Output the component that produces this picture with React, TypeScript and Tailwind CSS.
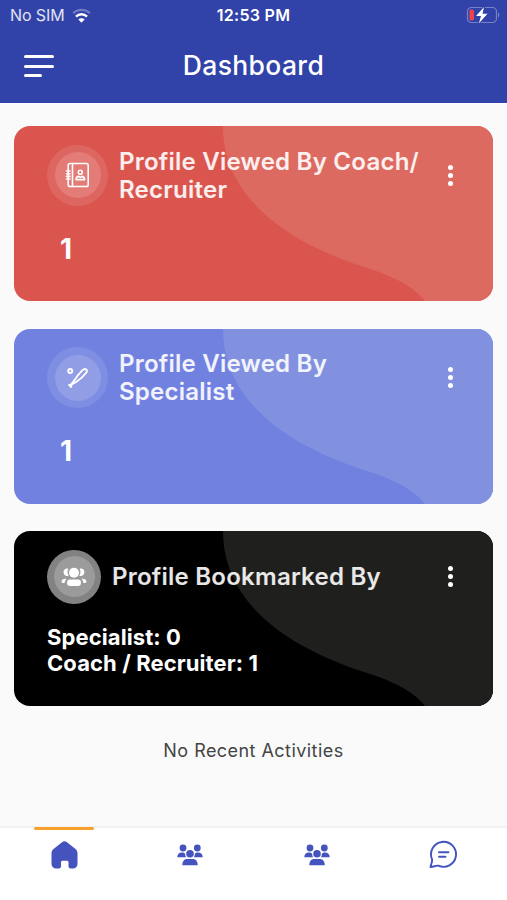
import React from 'react';

type StatCardProps = {
  title: React.ReactNode;
  icon: React.ReactNode;
  className: string;
  waveClassName: string;
  children: React.ReactNode;
};

const WifiIcon: React.FC = () => (
  <svg width="19" height="15" viewBox="0 0 20 15" fill="none" stroke="white">
    <path d="M1.200 5.200C6 .4 14 .4 18.800 5.200" strokeWidth="2.400" opacity=".3" />
    <path d="M4.200 8.600c3.200-3.100 8.400-3.100 11.600 0" strokeWidth="2.600" />
    <path d="M10 15 6.700 11.600c1.800-1.700 4.800-1.700 6.600 0z" fill="white" stroke="none" />
  </svg>
);

const BatteryIcon: React.FC = () => (
  <svg width="34" height="18" viewBox="0 0 34 18" fill="none">
    <rect x="1.500" y="1.500" width="29" height="15" rx="4" stroke="#7781ca" strokeWidth="1.200" />
    <path d="M32 6.500c1.700.6 1.700 4.400 0 5z" fill="#7781ca" />
    <rect x="3.500" y="3.500" width="4.500" height="11" rx="1.800" fill="#ef4349" />
    <path d="M18 1 10 10h5l-2.200 7.500 8.700-9.700h-5z" fill="white" stroke="#3142a8" strokeWidth="2" paintOrder="stroke" />
  </svg>
);

const ContactBookIcon: React.FC = () => (
  <svg width="25" height="26" viewBox="0 0 25 26" fill="none" stroke="white" strokeWidth="1.600" strokeLinecap="round">
    <rect x="3.200" y="1.500" width="20" height="23" rx="1.800" />
    <path d="M7.500 1.500v23M1.500 9h3.500M1.500 11.700h3.500M1.500 14.400h3.500M1.500 17h3.500" />
    <circle cx="15.300" cy="10.300" r="2" />
    <path d="M11 17.600c0-1.900 1.200-3 2.700-3.200l1.600 1 1.600-1c1.500.2 2.700 1.300 2.700 3.200z" strokeLinejoin="round" />
  </svg>
);

const BatIcon: React.FC = () => (
  <svg width="24" height="24" viewBox="0 0 24 24" fill="none" stroke="white" strokeWidth="1.900" strokeLinecap="round" strokeLinejoin="round">
    <circle cx="4.200" cy="5" r="2" />
    <path d="M4.500 19.300 8.500 14.200c1.800-3 4.800-6.700 8-10 1.200-1.200 2.600-1.500 3.600-.8 1.100.8 1 2.200.1 3.400-2.700 3.500-6.200 6.600-9.700 9z" />
    <path d="m3.400 18.900 1.700 1.700" strokeWidth="2.400" />
  </svg>
);

const GroupIcon: React.FC = () => (
  <svg width="26" height="20" viewBox="0 0 26 20" fill="white">
    <circle cx="13" cy="5.800" r="5" />
    <path d="M7.300 1.800C2.300.3.500 7.500 5.500 9c.8.200 1.500.1 2.200-.2C6.200 6.500 6.200 4 7.300 1.800zM18.700 1.800c5-1.500 6.800 5.700 1.800 7.200-.8.200-1.500.1-2.200-.2 1.500-2.300 1.500-4.800.4-7z" />
    <rect x="6" y="12.500" width="14" height="6.500" rx="3.250" />
    <path d="M5.500 11.700C2.500 11.500.5 12.600.5 14.500c0 1 .9 1.500 3.100 1.500.2-1.700.8-3.100 1.900-4.300zM20.500 11.700c3-.2 5 .9 5 2.800 0 1-.9 1.500-3.100 1.500-.2-1.700-.8-3.100-1.900-4.300z" />
  </svg>
);

const HomeIcon: React.FC = () => (
  <svg width="27" height="28" viewBox="0 0 27 28" fill="#4453be">
    <path d="M11 1.300a4 4 0 0 1 5 0l8.500 6.600A5 5 0 0 1 26.500 12v11a4.500 4.500 0 0 1-4.500 4.500h-2.300c-1.400 0-2.200-.9-2.200-2.200v-4c0-1-.6-1.600-1.600-1.600h-4.300c-1 0-1.600.6-1.600 1.600v4c0 1.300-.8 2.200-2.200 2.200H5A4.500 4.500 0 0 1 .5 23V12a5 5 0 0 1 2-4.100z" />
  </svg>
);

const PeopleIcon: React.FC = () => (
  <svg width="26" height="22" viewBox="0 0 26 22" fill="#4453be">
    <circle cx="6" cy="4" r="3.400" />
    <circle cx="20.300" cy="4" r="3.400" />
    <path d="M.3 13.300C.3 10 2.200 8.500 4.800 8.500c1.500 0 2.600.4 3.400 1.200-.1 1.400.2 2.600 1 3.600zM25.700 13.300c0-3.300-1.900-4.800-4.500-4.800-1.500 0-2.600.4-3.400 1.200.1 1.400-.2 2.600-1 3.600z" />
    <circle cx="13" cy="9.700" r="3.800" />
    <path d="M5.300 21.200c0-4.200 2.200-6.200 4.700-6.200h6c2.500 0 4.700 2 4.700 6.200z" />
  </svg>
);

const ChatIcon: React.FC = () => (
  <svg width="29" height="29" viewBox="0 0 29 29" fill="none" stroke="#4453be" strokeWidth="1.900" strokeLinecap="round" strokeLinejoin="round">
    <path d="M3 19.200A12.500 12.500 0 1 1 9.300 25.700c-2.500-.5-4.500 1.300-7.800 1.300.4-2.800 2.100-5.100 1.500-7.800z" />
    <path d="M10 12.200h9.500M10 16.800h6.500" />
  </svg>
);

const StatCard: React.FC<StatCardProps> = ({ title, icon, className, waveClassName, children }) => (
  <section className={`relative h-[175px] overflow-hidden rounded-2xl text-white ${className}`}>
    <svg className={`absolute inset-0 ${waveClassName}`} width="479" height="175" viewBox="0 0 479 175" fill="currentColor">
      <path d="M209 0C209 70 270 115 350 141 383 151 402 163 411 175H479V0z" />
    </svg>
    <div className="relative flex h-full flex-col pl-[33px] pt-[18.600px]">
      <div className="flex items-center">
        {icon}
        <h2 className="flex-1 whitespace-nowrap pt-px text-[24.100px] font-semibold leading-[28px] tracking-[0.200px] text-white/90">{title}</h2>
        <button className="mr-[40px] flex flex-col gap-[3px]" aria-label="More options">
          <span className="size-[5px] rounded-full bg-white" />
          <span className="size-[5px] rounded-full bg-white" />
          <span className="size-[5px] rounded-full bg-white" />
        </button>
      </div>
      {children}
    </div>
  </section>
);

const App: React.FC = () => {
  return (
    <div className="flex h-[900px] w-[507px] flex-col overflow-hidden bg-[#fafafa] font-['Inter',sans-serif]">
      <header className="h-[103px] bg-[#3142a8] text-white">
        <div className="grid h-[30px] grid-cols-3 items-center text-[16px]">
          <div className="flex items-center gap-[7px] pl-[10px] text-white/85">
            <span className="tracking-[-0.100px]">No SIM</span>
            <WifiIcon />
          </div>
          <span className="text-center font-semibold tracking-[0.300px]">12:53 PM</span>
          <div className="flex justify-end pr-[7px]">
            <BatteryIcon />
          </div>
        </div>
        <div className="grid h-[72px] grid-cols-[60px_1fr_60px] items-center">
          <button className="ml-6 flex flex-col gap-[6.500px]" aria-label="Menu">
            <span className="h-[3px] w-[30px] rounded-full bg-white" />
            <span className="h-[3px] w-[30px] rounded-full bg-white" />
            <span className="h-[3px] w-[18px] rounded-full bg-white" />
          </button>
          <h1 className="text-center text-[26.500px] font-medium tracking-[0.350px]">Dashboard</h1>
        </div>
      </header>

      <main className="flex flex-1 flex-col gap-[27.500px] px-[14px] pt-[23px]">
        <StatCard
          title={<>Profile Viewed By Coach/<br />Recruiter</>}
          className="bg-[#da554e]"
          waveClassName="text-[#dd6a61]"
          icon={
            <div className="mr-[11px] flex size-[61px] items-center justify-center rounded-full bg-white/10">
              <div className="flex size-[46px] items-center justify-center rounded-full bg-white/15">
                <ContactBookIcon />
              </div>
            </div>
          }
        >
          <p className="mt-[25px] pl-[13px] text-[28px] font-bold leading-[36px]">1</p>
        </StatCard>

        <StatCard
          title={<>Profile Viewed By<br />Specialist</>}
          className="bg-[#7081df]"
          waveClassName="text-[#8191e0]"
          icon={
            <div className="mr-[11px] flex size-[61px] items-center justify-center rounded-full bg-white/10">
              <div className="flex size-[46px] items-center justify-center rounded-full bg-white/15">
                <BatIcon />
              </div>
            </div>
          }
        >
          <p className="mt-[25px] pl-[13px] text-[28px] font-bold leading-[36px]">1</p>
        </StatCard>

        <StatCard
          title="Profile Bookmarked By"
          className="bg-black"
          waveClassName="text-[#1f1f1d]"
          icon={
            <div className="mr-[11px] flex size-[54px] items-center justify-center rounded-full bg-[#828282]">
              <div className="flex size-[41px] items-center justify-center rounded-full bg-[#9b9b9b]">
                <GroupIcon />
              </div>
            </div>
          }
        >
          <div className="mt-[20px] text-[22px] font-bold leading-[26px] tracking-[0.100px]">
            <p>Specialist: 0</p>
            <p>Coach / Recruiter: 1</p>
          </div>
        </StatCard>

        <p className="mt-[3px] text-center text-[18px] tracking-[0.450px] text-[#444]">No Recent Activities</p>
      </main>

      <nav className="grid h-[74px] grid-cols-4 border-t-2 border-[#f2f2f2] bg-white">
        <a className="relative flex justify-center pl-[2px] pt-[13px]">
          <span className="absolute -top-px left-[34px] h-[3px] w-[60px] rounded-full bg-[#f7a02b]" />
          <HomeIcon />
        </a>
        <a className="flex justify-center pt-[16px]">
          <PeopleIcon />
        </a>
        <a className="flex justify-center pl-px pt-[16px]">
          <PeopleIcon />
        </a>
        <a className="flex justify-center pt-[12px]">
          <ChatIcon />
        </a>
      </nav>
    </div>
  );
};

export default App;
